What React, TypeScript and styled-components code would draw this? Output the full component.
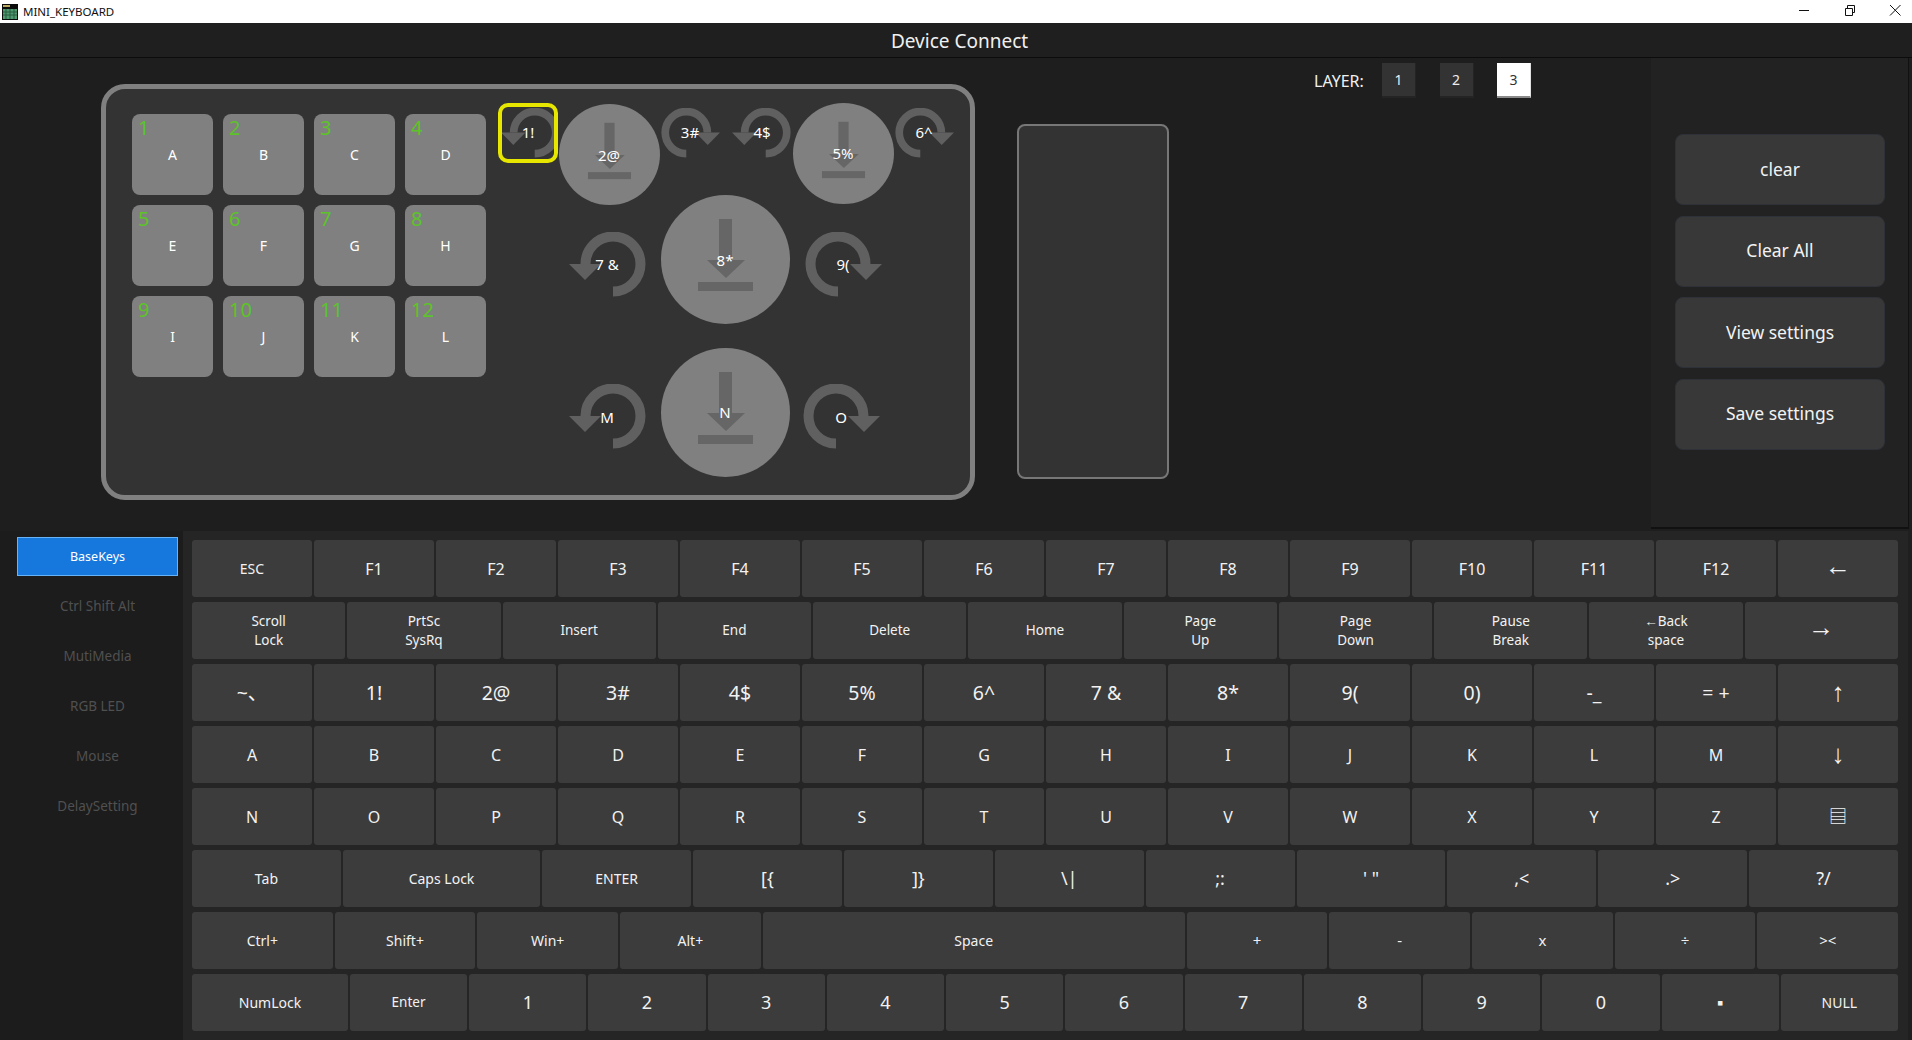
import React from "react";
import styled, { createGlobalStyle } from "styled-components";

const GlobalStyle = createGlobalStyle`
  html, body {
    margin: 0;
    padding: 0;
    width: 100%;
    height: 100%;
    overflow: hidden;
    background: #1f1f1f;
    font-family: "Noto Sans", "Open Sans", "Liberation Sans", "Noto Sans CJK SC", sans-serif;
  }
  #root {
    height: 100%;
  }
`;

const Page = styled.div`
  display: flex;
  flex-direction: column;
  width: 1912px;
  height: 1040px;
  overflow: hidden;
  background: #1f1f1f;
`;

const TitleBar = styled.div`
  display: flex;
  align-items: center;
  flex: 0 0 23px;
  background: #ffffff;
  color: #111111;
  font-size: 11.5px;
`;

const AppIcon = styled.svg`
  width: 16px;
  height: 16px;
  margin: 0 5px 0 2px;
`;

const WindowControls = styled.div`
  display: flex;
  align-items: center;
  gap: 25.5px;
  margin-left: auto;
  margin-right: 7px;
  margin-bottom: 3px;
`;

const WindowIcon = styled.svg`
  width: 20px;
  height: 12px;
  overflow: visible;
  stroke: #111111;
  stroke-width: 1;
  fill: none;
`;

const Header = styled.div`
  display: flex;
  align-items: center;
  justify-content: center;
  flex: 0 0 35px;
  box-sizing: border-box;
  padding: 2px 0 0 7px;
  border-bottom: 1px solid #0c0c0c;
  background: #1f1f1f;
  color: #f0f0f0;
  font-size: 19px;
`;

const Main = styled.div`
  display: flex;
  flex: 0 0 473px;
  background: #1e1e1e;
`;

const Workspace = styled.div`
  display: flex;
  align-items: flex-start;
  flex: 1;
  padding-left: 101px;
`;

const DevicePanel = styled.div`
  display: flex;
  align-items: flex-start;
  gap: 12px;
  box-sizing: border-box;
  width: 874px;
  height: 416px;
  margin-top: 26px;
  padding: 14px 0 0 26px;
  border: 5px solid #808080;
  border-radius: 24px;
  background: #333333;
`;

const KeyGrid = styled.div`
  display: grid;
  grid-template-columns: repeat(4, 81px);
  grid-auto-rows: 81px;
  gap: 10px;
  margin-top: 11px;
`;

const PadKey = styled.div`
  position: relative;
  display: flex;
  align-items: center;
  justify-content: center;
  border-radius: 8px;
  background: #808080;
  color: #ffffff;
  font-size: 14px;
`;

const PadNumber = styled.span`
  position: absolute;
  left: 6px;
  top: 0;
  color: #5cc428;
  font-size: 20px;
  line-height: 28px;
`;

const KnobCanvas = styled.div`
  position: relative;
  flex: 0 0 456px;
  height: 374px;
`;

const KnobNode = styled.svg<{ $x: number; $y: number; $w: number; $h: number; $flip?: boolean }>`
  position: absolute;
  left: ${(p) => p.$x}px;
  top: ${(p) => p.$y}px;
  width: ${(p) => p.$w}px;
  height: ${(p) => p.$h}px;
  transform: ${(p) => (p.$flip ? "scaleX(-1)" : "none")};
`;

const SelectedBox = styled.div`
  position: absolute;
  left: 0;
  top: 0;
  box-sizing: border-box;
  width: 60px;
  height: 60px;
  border: 4px solid #e6e600;
  border-radius: 10px;
  overflow: hidden;
`;

const KnobLabel = styled.span<{ $x: number; $y: number }>`
  position: absolute;
  left: ${(p) => p.$x}px;
  top: ${(p) => p.$y - 1}px;
  transform: translate(-50%, -50%);
  color: #ffffff;
  font-size: 15px;
  line-height: 18px;
  white-space: nowrap;
`;

const ScreenBox = styled.div`
  flex: 0 0 auto;
  box-sizing: border-box;
  width: 152px;
  height: 355px;
  margin: 66px 0 0 42px;
  border: 2px solid #777777;
  border-radius: 8px;
  background: #333333;
`;

const LayerBar = styled.div`
  display: flex;
  align-items: center;
  margin: 5px 0 0 145px;
  color: #f0f0f0;
  font-size: 16px;
`;

const LayerName = styled.span`
  width: 68px;
`;

const LayerButton = styled.div<{ $active?: boolean }>`
  display: flex;
  align-items: center;
  justify-content: center;
  box-sizing: border-box;
  width: 34px;
  height: 35px;
  margin-right: 23.5px;
  border-bottom: 2px solid ${(p) => (p.$active ? "#8a8a8a" : "#242424")};
  border-right: 1px solid ${(p) => (p.$active ? "#e0e0e0" : "#242424")};
  background: ${(p) => (p.$active ? "#ffffff" : "#333333")};
  color: ${(p) => (p.$active ? "#333333" : "#eeeeee")};
  font-size: 14px;
`;

const SidePanel = styled.div`
  display: flex;
  flex-direction: column;
  gap: 10.5px;
  flex: 0 0 258px;
  box-sizing: border-box;
  height: 471px;
  margin-right: 3px;
  padding: 76px 0 0 24px;
  border-bottom: 2px solid #111111;
  border-right: 1px solid #111111;
  background: #222222;
`;

const ActionButton = styled.div`
  display: flex;
  align-items: center;
  justify-content: center;
  box-sizing: border-box;
  width: 210px;
  height: 71px;
  padding-bottom: 2px;
  border: 1px solid #2e3138;
  border-radius: 8px;
  background: #383838;
  color: #f2f2f2;
  font-size: 17.5px;
`;

const Bottom = styled.div`
  display: flex;
  flex: 1;
  min-height: 0;
`;

const SideNav = styled.div`
  display: flex;
  flex-direction: column;
  flex: 0 0 183px;
  box-sizing: border-box;
  padding: 6px 5px 0 17px;
  background: #1c1c1c;
`;

const NavItem = styled.div<{ $active?: boolean }>`
  display: flex;
  align-items: center;
  justify-content: center;
  box-sizing: border-box;
  height: ${(p) => (p.$active ? "39px" : "50px")};
  margin-bottom: ${(p) => (p.$active ? "5px" : "0")};
  border: ${(p) => (p.$active ? "1px solid #66b4f7" : "none")};
  background: ${(p) => (p.$active ? "#1677dc" : "transparent")};
  color: ${(p) => (p.$active ? "#ffffff" : "#505050")};
  font-size: ${(p) => (p.$active ? "12.5px" : "13.5px")};
`;

const KeyBoard = styled.div`
  display: flex;
  flex-direction: column;
  gap: 5px;
  flex: 0 0 1725px;
  box-sizing: border-box;
  padding: 9px 10px 0 9px;
  background: #252525;
`;

const KeyRow = styled.div`
  display: flex;
  gap: 2px;
  height: 57px;
`;

const Key = styled.div<{ $grow: number; $size: number; $lift: number }>`
  display: flex;
  align-items: center;
  justify-content: center;
  flex: ${(p) => p.$grow} 1 0;
  min-width: 0;
  box-sizing: border-box;
  padding-top: ${(p) => (p.$lift < 0 ? -p.$lift : 0)}px;
  padding-bottom: ${(p) => (p.$lift > 0 ? p.$lift : 0)}px;
  border-radius: 3px;
  background: #3c3c3c;
  color: #f2f2f2;
  font-size: ${(p) => p.$size}px;
  line-height: 19px;
  text-align: center;
  white-space: pre-line;
`;

// lift: extra padding under the label (negative: above it), the arrow glyphs sit low in their line
type KeyDef = { label: string; size: number; grow?: number; lift?: number };

const row = (labels: string[], size: number, lift = 0): KeyDef[] => labels.map((label) => ({ label, size, lift }));

const KEY_ROWS: KeyDef[][] = [
  [
    { label: "ESC", size: 14 },
    ...row(["F1", "F2", "F3", "F4", "F5", "F6", "F7", "F8", "F9", "F10", "F11", "F12"], 16, -1),
    { label: "←", size: 26, lift: 7 },
  ],
  [
    ...row(
      ["Scroll\nLock", "PrtSc\nSysRq", "Insert", "End", "Delete", "Home", "Page\nUp", "Page\nDown", "Pause\nBreak", "←Back\nspace"],
      13.5
    ),
    { label: "→", size: 26, lift: 9 },
  ],
  [
    ...row(["~、", "1!", "2@", "3#", "4$", "5%", "6^", "7 &", "8*", "9(", "0)", "-_", "= +"], 19.5),
    { label: "↑", size: 26, lift: 3 },
  ],
  [...row(["A", "B", "C", "D", "E", "F", "G", "H", "I", "J", "K", "L", "M"], 16, -2), { label: "↓", size: 26, lift: 3 }],
  [...row(["N", "O", "P", "Q", "R", "S", "T", "U", "V", "W", "X", "Y", "Z"], 16, -2), { label: "▤", size: 18 }],
  [
    { label: "Tab", size: 14 },
    { label: "Caps Lock", size: 14, grow: 1.325 },
    { label: "ENTER", size: 14 },
    ...row(["[{", "]}", "\\|", ";:", "' \"", ",<", ".>", "?/"], 18),
  ],
  [
    ...row(["Ctrl+", "Shift+", "Win+", "Alt+"], 14),
    { label: "Space", size: 14, grow: 3 },
    ...row(["+", "-", "x", "÷", "><"], 15),
  ],
  [
    { label: "NumLock", size: 14, grow: 1.33 },
    { label: "Enter", size: 13.5 },
    ...row(["1", "2", "3", "4", "5", "6", "7", "8", "9", "0", "▪"], 18),
    { label: "NULL", size: 14 },
  ],
];

const PAD_KEYS = ["A", "B", "C", "D", "E", "F", "G", "H", "I", "J", "K", "L"];
const NAV_ITEMS = ["BaseKeys", "Ctrl Shift Alt", "MutiMedia", "RGB LED", "Mouse", "DelaySetting"];
const ACTIONS = ["clear", "Clear All", "View settings", "Save settings"];

type Knob = {
  kind: "ccw" | "cw" | "press";
  x: number;
  y: number;
  size?: number;
  big?: boolean;
  label: string;
  lx: number;
  ly: number;
};

const KNOBS: Knob[] = [
  { kind: "press", x: 61, y: 1, size: 101, label: "2@", lx: 111, ly: 53 },
  { kind: "cw", x: 163, y: 5, label: "3#", lx: 192, ly: 30 },
  { kind: "ccw", x: 234, y: 5, label: "4$", lx: 264, ly: 30 },
  { kind: "press", x: 295, y: 0, size: 101, label: "5%", lx: 345, ly: 51 },
  { kind: "cw", x: 397, y: 5, label: "6^", lx: 426, ly: 30 },
  { kind: "ccw", x: 71, y: 129, big: true, label: "7 &", lx: 109, ly: 162 },
  { kind: "press", x: 163, y: 92, size: 129, label: "8*", lx: 227, ly: 158 },
  { kind: "cw", x: 307, y: 129, big: true, label: "9(", lx: 345, ly: 162 },
  { kind: "ccw", x: 71, y: 281, big: true, label: "M", lx: 109, ly: 315 },
  { kind: "press", x: 163, y: 245, size: 129, label: "N", lx: 227, ly: 310 },
  { kind: "cw", x: 305, y: 281, big: true, label: "O", lx: 343, ly: 315 },
];

// rotary arrow, drawn counter-clockwise and mirrored for the clockwise ones
const RotaryShape = () => (
  <>
    <path d="M44 59.5A27.5 27.5 0 1 0 16.5 32" fill="none" stroke="#606060" strokeWidth="10" />
    <polygon points="0,32 32,32 16,48" fill="#606060" />
  </>
);

const PressShape = () => (
  <>
    <circle cx="64.5" cy="64.5" r="64.5" fill="#808080" />
    <rect x="58" y="24" width="13" height="42" fill="#666666" />
    <polygon points="46,65 84,65 65,83" fill="#666666" />
    <rect x="37" y="87" width="55" height="9" fill="#666666" />
  </>
);

const App = () => {
  return (
    <Page>
      <GlobalStyle />
      <TitleBar>
        <AppIcon viewBox="0 0 16 16">
          <rect width="16" height="16" fill="#0b0b0b" />
          <rect x="1" y="1" width="7" height="2" fill="#b8a860" />
          <rect x="1" y="5" width="14" height="10" fill="#4f9a6e" />
          <path d="M1 8h14M1 11h14M4 5v10M8 5v10M12 5v10" stroke="#2a5c40" strokeWidth="1" />
        </AppIcon>
        MINI_KEYBOARD
        <WindowControls>
          <WindowIcon viewBox="0 0 20 12">
            <path d="M5 6.5h10" />
          </WindowIcon>
          <WindowIcon viewBox="0 0 20 12">
            <path d="M5.5 4.5h7v7h-7zM7.5 4.5v-3h7v7h-2" />
          </WindowIcon>
          <WindowIcon viewBox="0 0 20 12">
            <path d="M5 1l10.5 10.5M15.5 1l-10.5 10.5" />
          </WindowIcon>
        </WindowControls>
      </TitleBar>
      <Header>Device Connect</Header>
      <Main>
        <Workspace>
          <DevicePanel>
            <KeyGrid>
              {PAD_KEYS.map((k, i) => (
                <PadKey key={k}>
                  <PadNumber>{i + 1}</PadNumber>
                  {k}
                </PadKey>
              ))}
            </KeyGrid>
            <KnobCanvas>
              <SelectedBox>
                <KnobNode viewBox="0 0 77 65" $x={-1.5} $y={1} $w={59} $h={50}>
                  <RotaryShape />
                </KnobNode>
              </SelectedBox>
              <KnobLabel $x={30} $y={30}>
                1!
              </KnobLabel>
              {KNOBS.map((k) =>
                k.kind === "press" ? (
                  <KnobNode key={k.label} viewBox="0 0 129 129" $x={k.x} $y={k.y} $w={k.size!} $h={k.size!}>
                    <PressShape />
                  </KnobNode>
                ) : (
                  <KnobNode
                    key={k.label}
                    viewBox="0 0 77 65"
                    $x={k.x}
                    $y={k.y}
                    $w={k.big ? 77 : 59}
                    $h={k.big ? 65 : 50}
                    $flip={k.kind === "cw"}
                  >
                    <RotaryShape />
                  </KnobNode>
                )
              )}
              {KNOBS.map((k) => (
                <KnobLabel key={k.label} $x={k.lx} $y={k.ly}>
                  {k.label}
                </KnobLabel>
              ))}
            </KnobCanvas>
          </DevicePanel>
          <ScreenBox />
          <LayerBar>
            <LayerName>LAYER:</LayerName>
            <LayerButton>1</LayerButton>
            <LayerButton>2</LayerButton>
            <LayerButton $active>3</LayerButton>
          </LayerBar>
        </Workspace>
        <SidePanel>
          {ACTIONS.map((a) => (
            <ActionButton key={a}>{a}</ActionButton>
          ))}
        </SidePanel>
      </Main>
      <Bottom>
        <SideNav>
          {NAV_ITEMS.map((n, i) => (
            <NavItem key={n} $active={i === 0}>
              {n}
            </NavItem>
          ))}
        </SideNav>
        <KeyBoard>
          {KEY_ROWS.map((keys, i) => (
            <KeyRow key={i}>
              {keys.map((k) => (
                <Key key={k.label} $grow={k.grow ?? 1} $size={k.size} $lift={k.lift ?? 0}>
                  {k.label}
                </Key>
              ))}
            </KeyRow>
          ))}
        </KeyBoard>
      </Bottom>
    </Page>
  );
};

export default App;
